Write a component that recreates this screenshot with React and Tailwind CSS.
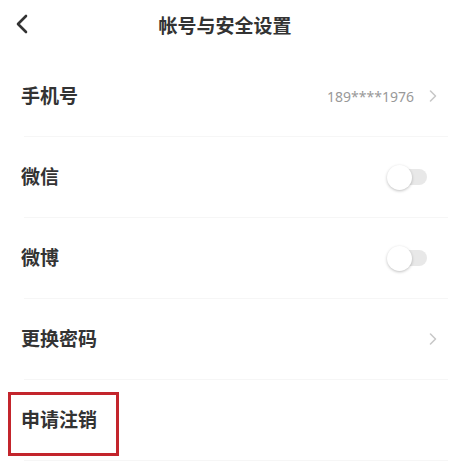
import { useState } from 'react';

const rows = [
  { id: 'phone', label: '手机号', value: '189****1976', type: 'link' },
  { id: 'wechat', label: '微信', type: 'switch' },
  { id: 'weibo', label: '微博', type: 'switch' },
  { id: 'password', label: '更换密码', type: 'link' },
  { id: 'cancel', label: '申请注销', type: 'plain', marked: true },
];

function ChevronRight() {
  return (
    <svg width="10" height="14" viewBox="0 0 10 14" fill="none">
      <path d="M2.5 2l5 5-5 5" stroke="#c8c8c8" strokeWidth="1.6" strokeLinecap="round" strokeLinejoin="round" />
    </svg>
  );
}

function Toggle({ on, onChange }) {
  return (
    <button onClick={() => onChange(!on)} className="relative w-[40px] h-[24px] flex items-center">
      <span className="absolute left-[6px] right-0 h-[16px] rounded-full bg-[#e8e8e8]" />
      <span className="absolute left-0 w-[25px] h-[25px] rounded-full bg-white shadow-[0_1px_3px_rgba(0,0,0,0.25)]" />
    </button>
  );
}

export default function App() {
  const [switches, setSwitches] = useState({ wechat: false, weibo: false });

  return (
    <div className="w-[466px] h-[462px] bg-white overflow-hidden" style={{ fontFamily: '"Noto Sans", "Noto Sans CJK SC", sans-serif' }}>
      <div className="relative h-[56px] flex justify-center pt-[12px] pr-[16px]">
        <button className="absolute left-[13px] top-[14px]">
          <svg width="18" height="20" viewBox="0 0 18 20" fill="none">
            <path d="M13 2L5 10l8 8" stroke="#333" strokeWidth="2.6" strokeLinecap="round" strokeLinejoin="round" />
          </svg>
        </button>
        <h1 className="text-[19px] leading-[28px] font-semibold text-[#333]">帐号与安全设置</h1>
      </div>

      <div>
        {rows.map((row) => (
          <div key={row.id} className="relative">
            <div className="h-[80px] flex items-center pl-[21px] pr-[28px]">
              <span className="text-[19px] font-semibold text-[#333] flex-1">{row.label}</span>
              {row.value && <span className="text-[14px] text-[#999] mr-[14px]">{row.value}</span>}
              {row.type === 'link' && <ChevronRight />}
              {row.type === 'switch' && (
                <div className="mr-[11px]">
                  <Toggle on={switches[row.id]} onChange={(v) => setSwitches({ ...switches, [row.id]: v })} />
                </div>
              )}
            </div>
            <div className="ml-[24px] mr-[18px] h-px bg-[#f6f6f6]" />
            {row.marked && (
              <div className="absolute left-[8px] top-[12px] w-[111px] h-[64px] border-[3px] border-[#c3252c]" />
            )}
          </div>
        ))}
      </div>
    </div>
  );
}
